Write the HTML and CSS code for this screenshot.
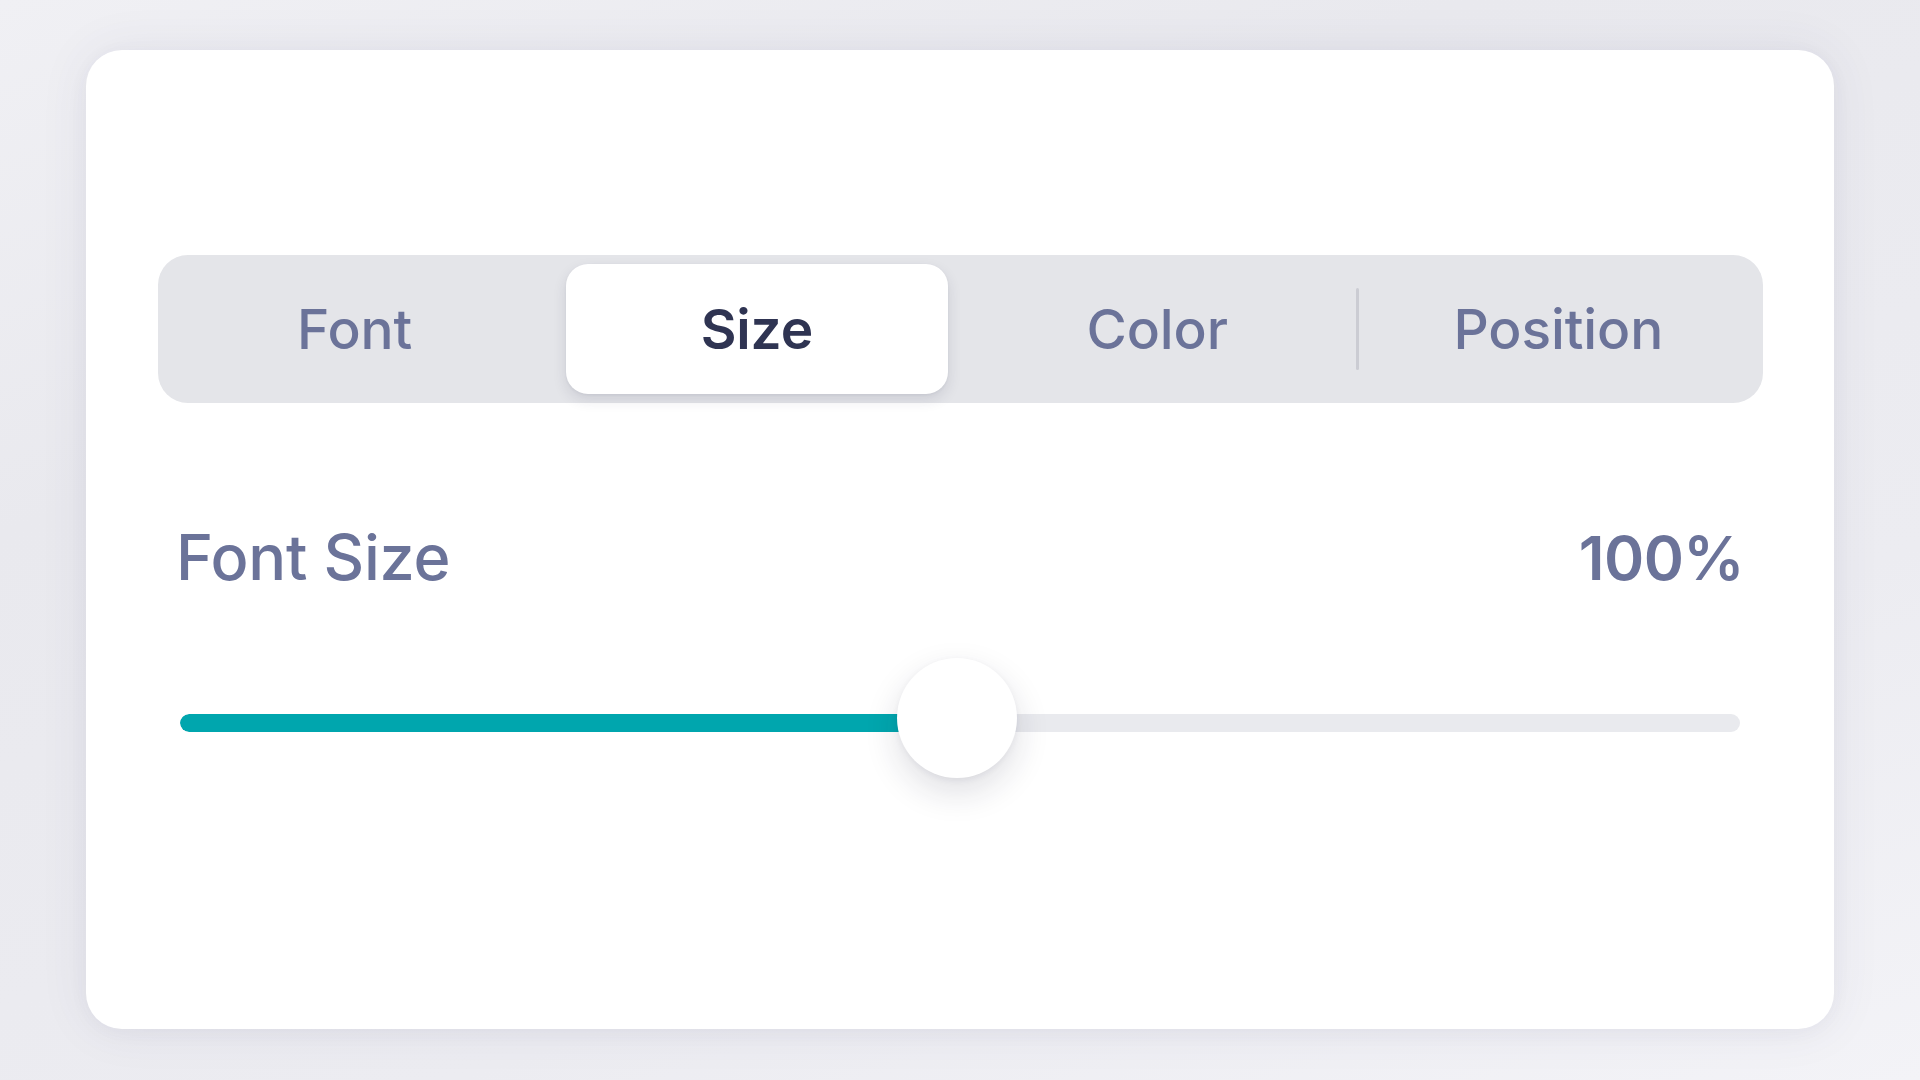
FILE: index.html
```html
<!DOCTYPE html>
<html lang="en">
<head>
<meta charset="utf-8">
<title>Text Settings</title>
<link rel="stylesheet" href="styles.css">
</head>
<body>
<main class="stage">
  <section class="card">
    <div class="segmented" role="tablist">
      <button class="seg" role="tab">Font</button>
      <button class="seg seg-active" role="tab">Size</button>
      <button class="seg seg-divided" role="tab">Color</button>
      <button class="seg" role="tab">Position</button>
    </div>
    <div class="setting">
      <div class="setting-head">
        <span class="setting-label">Font Size</span>
        <span class="setting-value">100%</span>
      </div>
      <div class="slider">
        <div class="track">
          <div class="track-fill" style="width: 49.8%"></div>
        </div>
        <div class="knob" style="left: 49.8%"></div>
      </div>
    </div>
  </section>
</main>
</body>
</html>
```

FILE: styles.css
```css
* { box-sizing: border-box; }

html, body {
  margin: 0;
  height: 100%;
}

body {
  font-family: Inter, "Noto Sans", "Liberation Sans", sans-serif;
  background: linear-gradient(160deg, #f0f0f4 0%, #e9e9ee 30%, #ececf1 70%, #f3f3f7 100%);
}

.stage {
  width: 1920px;
  height: 1080px;
  padding: 50px 86px 51px 86px;
}

.card {
  width: 1748px;
  height: 979px;
  background: #ffffff;
  border-radius: 36px;
  box-shadow: 0 0 50px rgba(70, 70, 110, 0.08), 0 4px 20px rgba(70, 70, 110, 0.04);
  padding: 205px 71px 0 72px;
}

.segmented {
  display: grid;
  grid-template-columns: repeat(4, 1fr);
  height: 148px;
  padding: 9px 0;
  background: #e4e5e9;
  border-radius: 30px;
}

.seg {
  position: relative;
  border: 0;
  background: transparent;
  font-family: inherit;
  font-size: 55px;
  font-weight: 500;
  color: #6b7399;
  letter-spacing: -0.1px;
  padding: 0 8px 0 0;
  margin: 0;
  border-radius: 22px;
}

.seg-active {
  background: #ffffff;
  color: #2f3452;
  font-weight: 600;
  padding: 0;
  margin: 0 13px 0 7px;
  box-shadow: 0 6px 14px rgba(40, 45, 70, 0.12), 0 1px 3px rgba(40, 45, 70, 0.06);
}

.seg-divided::after {
  content: "";
  position: absolute;
  right: 3px;
  top: 24px;
  bottom: 24px;
  width: 3px;
  border-radius: 2px;
  background: #cbccd3;
}

.setting {
  padding: 116px 19px 0 18px;
}

.setting-head {
  display: flex;
  justify-content: space-between;
  align-items: baseline;
}

.setting-label {
  font-size: 63px;
  font-weight: 500;
  color: #6b7399;
  letter-spacing: -0.3px;
}

.setting-value {
  font-size: 61px;
  font-weight: 600;
  color: #6b7399;
  letter-spacing: -0.6px;
}

.slider {
  position: relative;
  height: 120px;
  margin: 63px 4px 0 4px;
  padding-top: 56px;
}

.track {
  height: 18px;
  border-radius: 9px;
  background: #e9eaee;
  overflow: hidden;
}

.track-fill {
  height: 100%;
  background: #00a6ae;
  border-radius: 9px 0 0 9px;
}

.knob {
  position: absolute;
  top: 0;
  width: 120px;
  height: 120px;
  margin-left: -60px;
  border-radius: 50%;
  background: #ffffff;
  box-shadow: 0 14px 34px rgba(30, 30, 60, 0.14), 0 2px 6px rgba(30, 30, 60, 0.06);
}
```
